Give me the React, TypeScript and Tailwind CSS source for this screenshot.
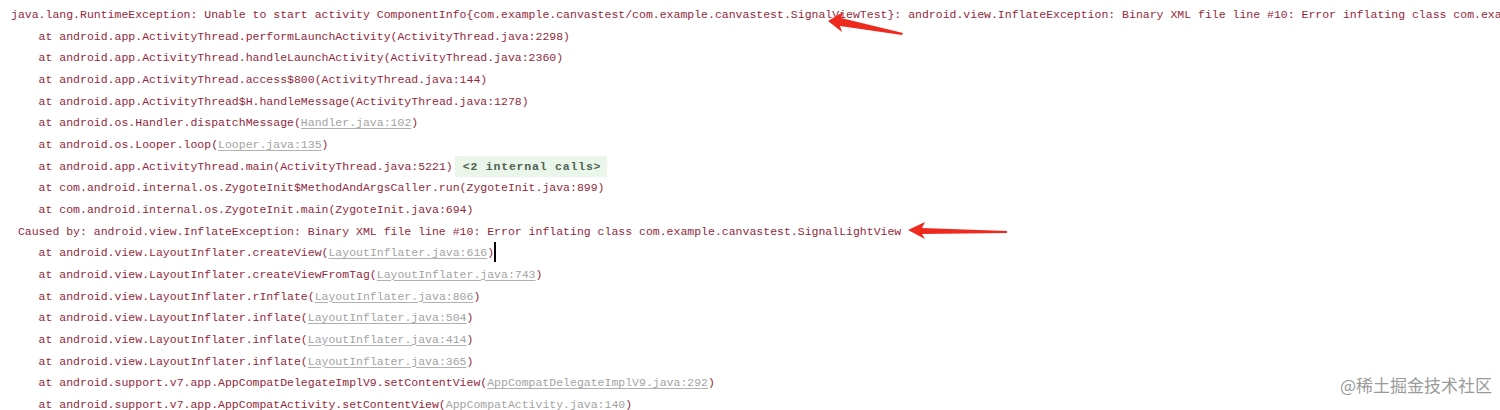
type Seg = { t: string; link?: boolean };

interface TraceLine {
  indent: number;
  segs: Seg[];
  internal?: string;
  cursor?: boolean;
}

const at = (method: string, file: string, link = false, extra: Partial<TraceLine> = {}): TraceLine => ({
  indent: 4,
  segs: [{ t: `at ${method}(` }, { t: file, link }, { t: ')' }],
  ...extra,
});

const lines: TraceLine[] = [
  {
    indent: 0,
    segs: [
      {
        t: 'java.lang.RuntimeException: Unable to start activity ComponentInfo{com.example.canvastest/com.example.canvastest.SignalViewTest}: android.view.InflateException: Binary XML file line #10: Error inflating class com.example.canvastest.SignalLightView',
      },
    ],
  },
  at('android.app.ActivityThread.performLaunchActivity', 'ActivityThread.java:2298'),
  at('android.app.ActivityThread.handleLaunchActivity', 'ActivityThread.java:2360'),
  at('android.app.ActivityThread.access$800', 'ActivityThread.java:144'),
  at('android.app.ActivityThread$H.handleMessage', 'ActivityThread.java:1278'),
  at('android.os.Handler.dispatchMessage', 'Handler.java:102', true),
  at('android.os.Looper.loop', 'Looper.java:135', true),
  at('android.app.ActivityThread.main', 'ActivityThread.java:5221', false, { internal: '<2 internal calls>' }),
  at('com.android.internal.os.ZygoteInit$MethodAndArgsCaller.run', 'ZygoteInit.java:899'),
  at('com.android.internal.os.ZygoteInit.main', 'ZygoteInit.java:694'),
  {
    indent: 1,
    segs: [
      {
        t: 'Caused by: android.view.InflateException: Binary XML file line #10: Error inflating class com.example.canvastest.SignalLightView',
      },
    ],
  },
  at('android.view.LayoutInflater.createView', 'LayoutInflater.java:616', true, { cursor: true }),
  at('android.view.LayoutInflater.createViewFromTag', 'LayoutInflater.java:743', true),
  at('android.view.LayoutInflater.rInflate', 'LayoutInflater.java:806', true),
  at('android.view.LayoutInflater.inflate', 'LayoutInflater.java:504', true),
  at('android.view.LayoutInflater.inflate', 'LayoutInflater.java:414', true),
  at('android.view.LayoutInflater.inflate', 'LayoutInflater.java:365', true),
  at('android.support.v7.app.AppCompatDelegateImplV9.setContentView', 'AppCompatDelegateImplV9.java:292', true),
  at('android.support.v7.app.AppCompatActivity.setContentView', 'AppCompatActivity.java:140', true),
];

function RedArrow({ d }: { d: string }) {
  return <path d={d} fill="#ee2a1f" />;
}

export default function App() {
  return (
    <div className="relative w-[1500px] h-[410px] overflow-hidden bg-white">
      {/* Console output */}
      <div
        className="pt-[4px] pl-[11px] text-[11.5px] leading-[21.67px] text-[#93283b] whitespace-pre"
        style={{ fontFamily: '"Liberation Mono", "DejaVu Sans Mono", monospace' }}
      >
        {lines.map((line, idx) => (
          <div key={idx} className="h-[21.67px]">
            {' '.repeat(line.indent)}
            {line.segs.map((s, i) =>
              s.link ? (
                <span key={i} className="text-[#a3a3a3] underline decoration-[#b0b0b0] underline-offset-2">
                  {s.t}
                </span>
              ) : (
                <span key={i}>{s.t}</span>
              )
            )}
            {line.cursor && (
              <span className="inline-block w-[2px] h-[20px] bg-black align-middle -mt-[3px]" />
            )}
            {line.internal && (
              <span className="inline-block bg-[#ebf6ea] font-bold text-[#4f6150] tracking-[0.8px] pl-[8px] pr-[6px] ml-[2px]">
                {line.internal}
              </span>
            )}
          </div>
        ))}
      </div>

      {/* Annotation arrows */}
      <svg className="absolute left-0 top-0" width="1500" height="410" viewBox="0 0 1500 410">
        <RedArrow d="M828 21 L843 12 L841 18 L903 33 L902 35 L840 26 L842 32 Z" />
        <RedArrow d="M908 230 L925 222 L922 228 L1007 231 L1007 233 L922 234 L925 239 Z" />
      </svg>

      {/* Watermark */}
      <div
        className="absolute right-[8px] bottom-[17px] text-[17px] leading-none text-[#9a9a9a]"
        style={{ fontFamily: '"Noto Sans CJK SC", "Noto Sans", sans-serif' }}
      >
        @稀土掘金技术社区
      </div>
    </div>
  );
}
